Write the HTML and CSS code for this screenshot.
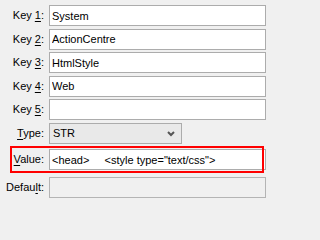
FILE: index.html
```html
<!DOCTYPE html>
<html>
<head>
<meta charset="utf-8">
<link rel="stylesheet" href="styles.css">
</head>
<body>
<div class="form">
  <div class="row"><label class="lbl">Key <u>1</u>:</label><input class="field" type="text" value="System"></div>
  <div class="row"><label class="lbl">Key <u>2</u>:</label><input class="field" type="text" value="ActionCentre"></div>
  <div class="row"><label class="lbl">Key <u>3</u>:</label><input class="field" type="text" value="HtmlStyle"></div>
  <div class="row"><label class="lbl">Key <u>4</u>:</label><input class="field" type="text" value="Web"></div>
  <div class="row"><label class="lbl">Key <u>5</u>:</label><input class="field" type="text" value=""></div>
  <div class="row"><label class="lbl"><u>T</u>ype:</label>
    <div class="select"><span>STR</span>
      <svg class="chev" width="8" height="6" viewBox="0 0 8 6"><polyline points="1,1 4,4 7,1" fill="none" stroke="#555" stroke-width="2"/></svg>
    </div>
  </div>
  <div class="row value-row"><label class="lbl"><u>V</u>alue:</label><input class="field" type="text" value="&lt;head&gt;     &lt;style type=&quot;text/css&quot;&gt;"></div>
  <div class="row default-row"><label class="lbl">Defau<u>l</u>t:</label><input class="field disabled" type="text" value="" disabled></div>
</div>
<div class="highlight"></div>
</body>
</html>
```
FILE: styles.css
```css
html, body {
  margin: 0;
  padding: 0;
  background: #f0f0f0;
  width: 266px;
  height: 202px;
  overflow: hidden;
  font-family: "Liberation Sans", Arial, sans-serif;
  font-size: 11px;
  color: #000;
}
.form {
  display: flex;
  flex-direction: column;
  gap: 2.5px;
  padding-top: 5px;
}
.row {
  display: grid;
  grid-template-columns: 44px 1fr;
  column-gap: 5px;
  height: 21px;
  align-items: center;
}
.lbl {
  text-align: right;
  white-space: nowrap;
  line-height: 21px;
}
.lbl u {
  text-decoration: underline;
  text-underline-offset: 2px;
}
.field {
  box-sizing: border-box;
  height: 21px;
  width: 217px;
  margin: 0;
  border: 1px solid #acacac;
  background: #fff;
  padding: 0 2px;
  font-family: "Liberation Sans", Arial, sans-serif;
  font-size: 11px;
  color: #000;
  outline: none;
  white-space: pre;
}
.field.disabled {
  background: #f0f0f0;
  border-color: #b4b4b4;
}
.select {
  box-sizing: border-box;
  height: 21px;
  width: 133px;
  border: 1px solid #acacac;
  background: #e9e9e9;
  display: flex;
  align-items: center;
  justify-content: space-between;
  padding: 0 6px 0 3px;
}
.chev {
  display: block;
  margin-top: 1px;
}
.value-row {
  margin-top: 3px;
}
.default-row {
  margin-top: 4px;
}
.highlight {
  position: absolute;
  left: 10px;
  top: 146px;
  width: 254px;
  height: 27px;
  box-sizing: border-box;
  border: 2px solid #ff0000;
  pointer-events: none;
}
```
